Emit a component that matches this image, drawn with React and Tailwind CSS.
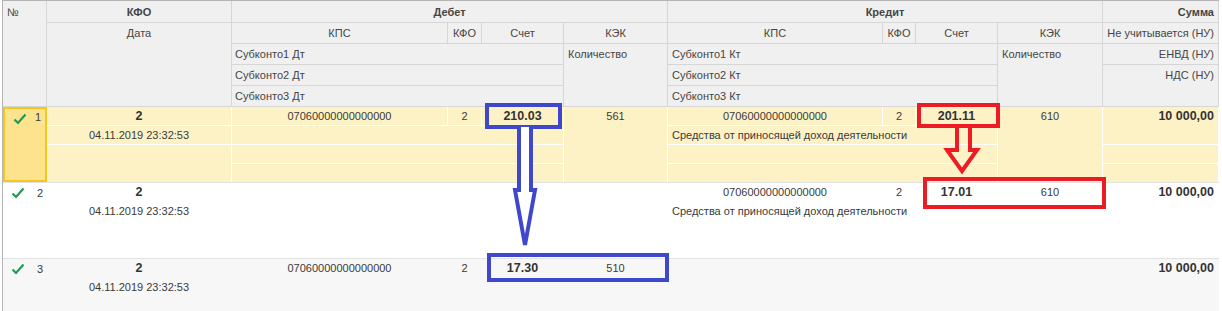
import React from "react";

const COLS =
  "grid grid-cols-[44px_185px_216px_34px_82px_104px_215px_33px_82px_105px_116px]";

function Check() {
  return (
    <svg width="14" height="12" viewBox="0 0 14 12" className="absolute left-[8px] top-[4px]">
      <path d="M1.5 6.5 L5 10 L12.5 1.5" fill="none" stroke="#1e9b50" strokeWidth="2.2" />
    </svg>
  );
}

function H({ className = "", children }) {
  return (
    <div
      className={
        "bg-[#f0f0f0] border-r border-b border-[#d6d6d6] px-[3px] text-[#454545] whitespace-nowrap overflow-hidden " +
        className
      }
    >
      {children}
    </div>
  );
}

function Header() {
  return (
    <div className={COLS + " grid-rows-[22px_21px_21px_21px_21px]"}>
      <H className="col-start-1 row-start-1 row-span-5 leading-[22px] pl-[4px]">№</H>
      <H className="col-start-2 row-start-1 leading-[22px] text-center font-bold text-[#333]">КФО</H>
      <H className="col-start-2 row-start-2 row-span-4 leading-[21px] text-center">Дата</H>

      <H className="col-start-3 col-span-4 row-start-1 leading-[22px] text-center font-bold text-[#333]">Дебет</H>
      <H className="col-start-3 row-start-2 leading-[21px] text-center">КПС</H>
      <H className="col-start-4 row-start-2 leading-[21px] text-center px-0">КФО</H>
      <H className="col-start-5 row-start-2 leading-[21px] text-center">Счет</H>
      <H className="col-start-6 row-start-2 leading-[21px] text-center">КЭК</H>
      <H className="col-start-3 col-span-3 row-start-3 leading-[21px]">Субконто1 Дт</H>
      <H className="col-start-3 col-span-3 row-start-4 leading-[21px]">Субконто2 Дт</H>
      <H className="col-start-3 col-span-3 row-start-5 leading-[21px]">Субконто3 Дт</H>
      <H className="col-start-6 row-start-3 row-span-3 leading-[21px] pl-[4px]">Количество</H>

      <H className="col-start-7 col-span-4 row-start-1 leading-[22px] text-center font-bold text-[#333]">Кредит</H>
      <H className="col-start-7 row-start-2 leading-[21px] text-center">КПС</H>
      <H className="col-start-8 row-start-2 leading-[21px] text-center px-0">КФО</H>
      <H className="col-start-9 row-start-2 leading-[21px] text-center">Счет</H>
      <H className="col-start-10 row-start-2 leading-[21px] text-center">КЭК</H>
      <H className="col-start-7 col-span-3 row-start-3 leading-[21px] pl-[4px]">Субконто1 Кт</H>
      <H className="col-start-7 col-span-3 row-start-4 leading-[21px] pl-[4px]">Субконто2 Кт</H>
      <H className="col-start-7 col-span-3 row-start-5 leading-[21px] pl-[4px]">Субконто3 Кт</H>
      <H className="col-start-10 row-start-3 row-span-3 leading-[21px] pl-[4px]">Количество</H>

      <H className="col-start-11 row-start-1 leading-[22px] text-right font-bold text-[#333] pr-[4px]">Сумма</H>
      <H className="col-start-11 row-start-2 leading-[21px] text-right pr-[4px]">Не учитывается (НУ)</H>
      <H className="col-start-11 row-start-3 leading-[21px] text-right pr-[4px]">ЕНВД (НУ)</H>
      <H className="col-start-11 row-start-4 row-span-2 leading-[21px] text-right pr-[4px]">НДС (НУ)</H>
    </div>
  );
}

function Row({ n, row, bg, line, selected }) {
  const c = "border-r border-b " + line + " leading-[18px] whitespace-nowrap overflow-hidden ";
  const last = "border-r " + line + " leading-[18px] whitespace-nowrap overflow-hidden ";
  const bold = "font-bold text-[12.5px] text-[#333] ";
  return (
    <div className={COLS + " grid-rows-[19px_19px_19px_18px] border-b border-[#e2e2e2] " + bg}>
      <div
        className={
          "col-start-1 row-start-1 row-span-4 relative " +
          (selected ? "bg-[#fde38e] border-2 border-[#f6c51e]" : "")
        }
      >
        <Check />
        <span className={"absolute right-[4px] leading-[18px] " + (selected ? "top-[-1px] right-[3px]" : "top-[1px]")}>
          {n}
        </span>
      </div>

      <div className={c + bold + "col-start-2 row-start-1 text-center"}>2</div>
      <div className={c + "col-start-2 row-start-2 text-center"}>04.11.2019 23:32:53</div>
      <div className={last + "col-start-2 row-start-3 row-span-2"}></div>

      <div className={c + "col-start-3 row-start-1 text-center"}>{row.dtKps}</div>
      <div className={c + "col-start-4 row-start-1 text-center"}>{row.dtKfo}</div>
      <div className={c + bold + "col-start-5 row-start-1 text-center"}>{row.dtSch}</div>
      <div className={last + "col-start-6 row-start-1 row-span-4 text-center"}>{row.dtKek}</div>
      <div className={c + "col-start-3 col-span-3 row-start-2 pl-[4px]"}></div>
      <div className={c + "col-start-3 col-span-3 row-start-3"}></div>
      <div className={last + "col-start-3 col-span-3 row-start-4"}></div>

      <div className={c + "col-start-7 row-start-1 text-center"}>{row.ktKps}</div>
      <div className={c + "col-start-8 row-start-1 text-center"}>{row.ktKfo}</div>
      <div className={c + bold + "col-start-9 row-start-1 text-center"}>{row.ktSch}</div>
      <div className={last + "col-start-10 row-start-1 row-span-4 text-center"}>{row.ktKek}</div>
      <div className={c + "col-start-7 col-span-3 row-start-2 pl-[4px]"}>{row.ktSub}</div>
      <div className={c + "col-start-7 col-span-3 row-start-3"}></div>
      <div className={last + "col-start-7 col-span-3 row-start-4"}></div>

      <div className={c + bold + "col-start-11 row-start-1 row-span-2 text-right pr-[4px]"}>10 000,00</div>
      <div className={c + "col-start-11 row-start-3"}></div>
      <div className={last + "col-start-11 row-start-4"}></div>
    </div>
  );
}

const KPS = "07060000000000000";
const SRC = "Средства от приносящей доход деятельности";

const rows = [
  { dtKps: KPS, dtKfo: "2", dtSch: "210.03", dtKek: "561", ktKps: KPS, ktKfo: "2", ktSch: "201.11", ktKek: "610", ktSub: SRC },
  { dtKps: "", dtKfo: "", dtSch: "", dtKek: "", ktKps: KPS, ktKfo: "2", ktSch: "17.01", ktKek: "610", ktSub: SRC },
  { dtKps: KPS, dtKfo: "2", dtSch: "17.30", dtKek: "510", ktKps: "", ktKfo: "", ktSch: "", ktKek: "", ktSub: "" },
];

export default function App() {
  return (
    <div className="w-[1222px] h-[311px] bg-white overflow-hidden font-['Liberation_Sans',Arial,sans-serif] text-[11px] text-[#3a3a3a]">
      <div className="relative ml-[2px] w-[1217px] border-l border-t border-[#b4b4b4]">
        <Header />
        <Row n="1" row={rows[0]} bg="bg-[#fdf2c6]" line="border-white" selected />
        <Row n="2" row={rows[1]} bg="bg-white" line="border-transparent" />
        <Row n="3" row={rows[2]} bg="bg-[#f7f7f7]" line="border-transparent" />

        {/* пометки поверх таблицы */}
        <svg className="absolute left-[-3px] top-[-1px] pointer-events-none" width="1222" height="311">
          <g fill="none" stroke="#3f48cc" strokeWidth="4" strokeLinejoin="miter">
            <rect x="487" y="105" width="73" height="22" />
            <rect x="489" y="255" width="178" height="25" />
            <path d="M519 127 L519 190 L515 190 L525 245 L535 190 L531 190 L531 127" fill="#fff" />
          </g>
          <g fill="none" stroke="#ed1c24" strokeWidth="4" strokeLinejoin="miter">
            <rect x="919" y="105" width="79" height="21" />
            <rect x="925" y="179" width="179" height="28" />
            <path d="M957 126 L957 150 L947 150 L962 171 L977 150 L970 150 L970 126" />
          </g>
        </svg>
      </div>
    </div>
  );
}
